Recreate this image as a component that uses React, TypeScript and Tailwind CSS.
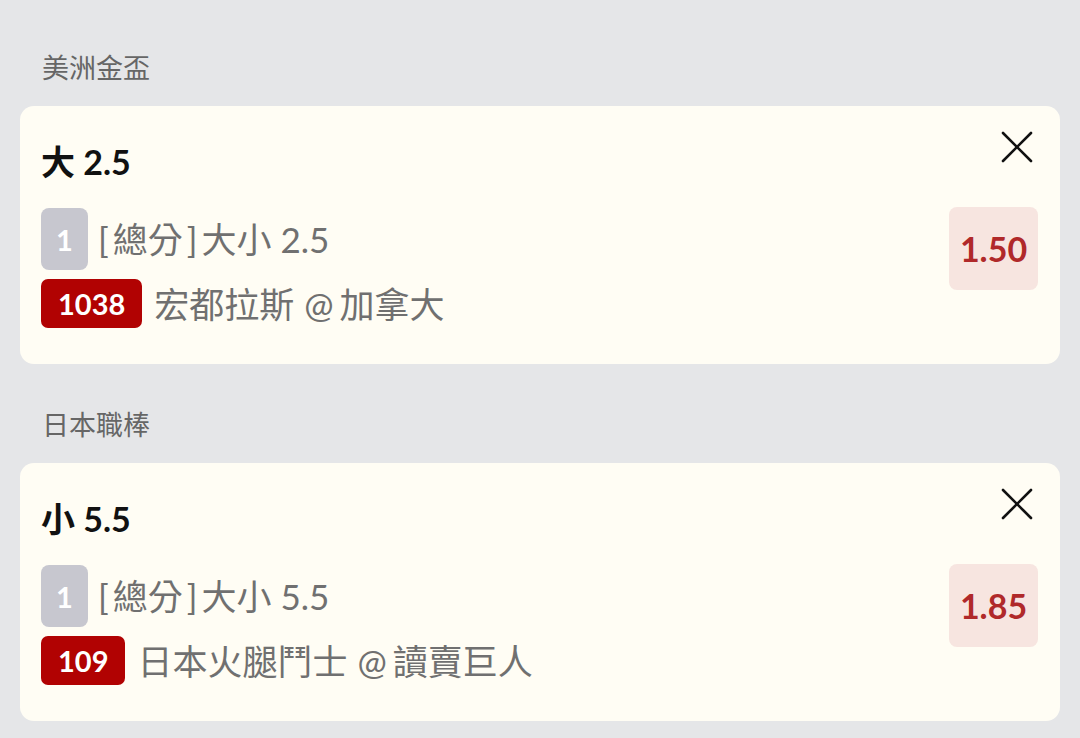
import React from 'react';

const FONT = "font-['Lato','Noto_Sans_CJK_TC',sans-serif]";

type Bet = {
  league: string;
  title: string;
  market: [string, string];
  code: string;
  match: string;
  odds: string;
};

const bets: Bet[] = [
  { league: '美洲金盃', title: '大 2.5', market: ['總分', '大小 2.5'], code: '1038', match: '宏都拉斯 @ 加拿大', odds: '1.50' },
  { league: '日本職棒', title: '小 5.5', market: ['總分', '大小 5.5'], code: '109', match: '日本火腿鬥士 @ 讀賣巨人', odds: '1.85' },
];

// --- Close icon ---
const CloseIcon: React.FC = () => (
  <svg width="32" height="32" viewBox="0 0 32 32" fill="none" stroke="#111" strokeWidth="2.6" strokeLinecap="round">
    <line x1="2" y1="2" x2="30" y2="30" />
    <line x1="30" y1="2" x2="2" y2="30" />
  </svg>
);

// --- Bet card ---
const BetCard: React.FC<{ bet: Bet }> = ({ bet }) => {
  const [home, away] = bet.match.split(' @ ');
  return (
    <section className="pt-[43px] first:pt-[50px]">
      <h2 className="h-[36px] leading-[36px] px-[42px] text-[27px] text-[#666666]">{bet.league}</h2>
      <div className="mt-[20px] mx-[20px] rounded-[14px] bg-[#fffdf4] pt-[25px] pb-[36px] pl-[21px] pr-[22px]">
        <div className="flex justify-between items-start">
          <div className="mt-[11px] h-[40px] leading-[40px] text-[34px] font-bold text-[#111]">{bet.title}</div>
          <button className="mr-[5px] w-[32px] h-[32px]"><CloseIcon /></button>
        </div>
        <div className="mt-[25px] flex justify-between items-start">
          <div className="pt-[1px] flex flex-col gap-[9px]">
            <div className="flex items-center gap-[10px]">
              <span className="w-[47px] h-[62px] rounded-[8px] bg-[#c7c7cf] text-white text-[29px] leading-none font-bold flex items-center justify-center">1</span>
              <span className="text-[35px] leading-[40px] text-[#707070]">
                <span className="mr-[4px]">[</span>{bet.market[0]}<span className="mx-[4px]">]</span>{bet.market[1]}
              </span>
            </div>
            <div className="flex items-center gap-[12px]">
              <span className="h-[49px] px-[17px] rounded-[7px] bg-[#b10202] text-white text-[29px] font-bold flex items-center">{bet.code}</span>
              <span className="text-[35px] leading-[40px] text-[#707070]">
                {home}<span className="ml-[10px] mr-[6px]">@</span>{away}
              </span>
            </div>
          </div>
          <div className="w-[89px] h-[83px] rounded-[8px] bg-[#f7e5e0] flex items-center justify-center text-[34px] font-bold text-[#b0292a]">
            {bet.odds}
          </div>
        </div>
      </div>
    </section>
  );
};

export default function App() {
  return (
    <div className={`${FONT} w-[1080px] h-[738px] overflow-hidden bg-[#e5e6e8]`}>
      {bets.map(b => <BetCard key={b.code} bet={b} />)}
    </div>
  );
}
